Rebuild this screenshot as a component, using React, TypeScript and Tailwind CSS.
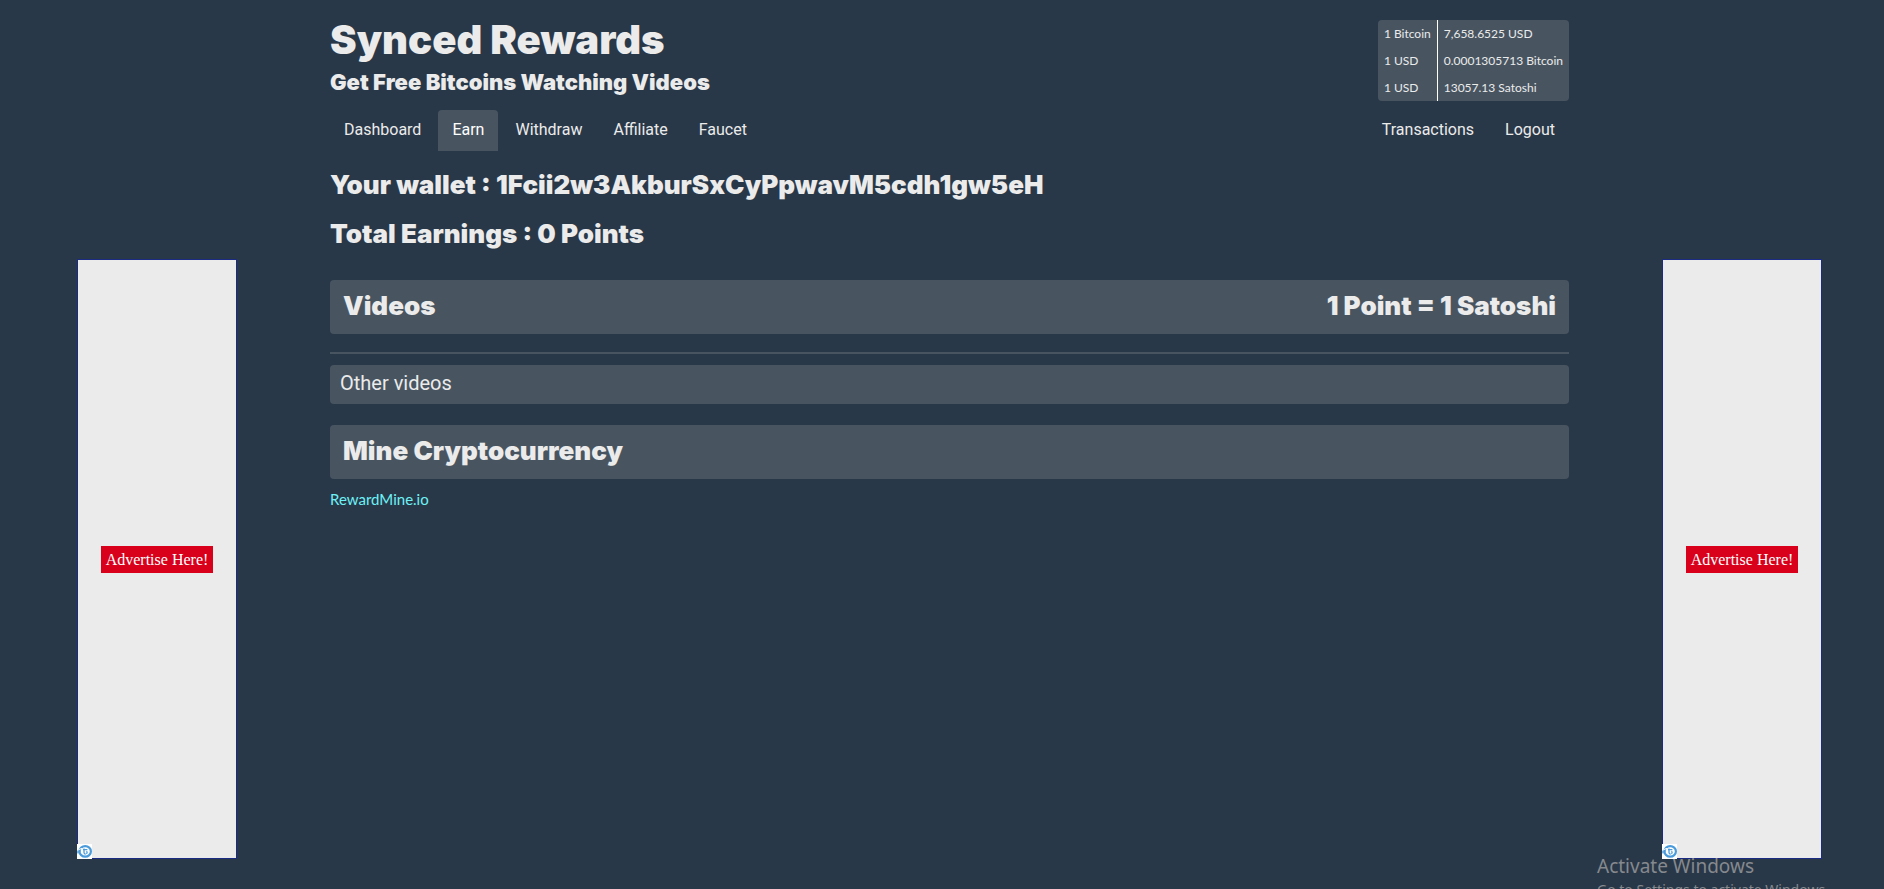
interface Tab {
  label: string;
  active?: boolean;
}

const leftTabs: Tab[] = [
  { label: 'Dashboard' },
  { label: 'Earn', active: true },
  { label: 'Withdraw' },
  { label: 'Affiliate' },
  { label: 'Faucet' },
];

const rightTabs: Tab[] = [{ label: 'Transactions' }, { label: 'Logout' }];

const rates = [
  ['1 Bitcoin', '7,658.6525 USD'],
  ['1 USD', '0.0001305713 Bitcoin'],
  ['1 USD', '13057.13 Satoshi'],
];

function Tabs({ items }: { items: Tab[] }) {
  return (
    <ul className="flex gap-[3px]">
      {items.map((t) => (
        <li key={t.label}>
          <a
            href="#"
            className={`block rounded-t px-[14px] pt-2 pb-[9px] font-['Roboto',sans-serif] text-base leading-6 ${
              t.active ? 'bg-[#485561] text-white' : 'text-[#ebebeb]'
            }`}
          >
            {t.label}
          </a>
        </li>
      ))}
    </ul>
  );
}

function AdLogo() {
  return (
    <svg viewBox="0 0 15 15" className="absolute -bottom-px -left-px h-[15px] w-[15px]" aria-hidden="true">
      <rect width="15" height="15" fill="#fff" />
      <ellipse cx="8.2" cy="7.4" rx="5.7" ry="5.3" fill="none" stroke="#4a9bdc" strokeWidth="2.2" />
      <path d="M1.6 5.6L5 4.4" stroke="#fff" strokeWidth="1" />
      <path d="M0 7.2h3.6M0 8.8h3" stroke="#4a9bdc" strokeWidth="1" />
      <path d="M7 4.4v4q0 1.8 1.8 1.8M6 5.6h4.4M9.4 7.2q1.4 1 0 2.6" fill="none" stroke="#4a9bdc" strokeWidth="1.3" />
    </svg>
  );
}

function AdColumn() {
  return (
    <aside className="relative mt-[259px] flex h-[600px] w-40 shrink-0 items-center justify-center border border-[#1b2a83] bg-[#ebebeb]">
      <a href="#" className="bg-[#d9001b] px-[5px] py-1 font-['Liberation_Serif',serif] text-base leading-[19px] whitespace-nowrap text-white">
        Advertise Here!
      </a>
      <AdLogo />
    </aside>
  );
}

function Panel({ title, note }: { title: string; note?: string }) {
  return (
    <div className="flex h-[54px] justify-between rounded bg-[#485561] px-[13px] pt-[11px]">
      <h2 className="font-['Inter',sans-serif] text-[26px] leading-[30px] font-black">{title}</h2>
      {note && <span className="font-['Inter',sans-serif] text-[26px] leading-[30px] font-black">{note}</span>}
    </div>
  );
}

export default function App() {
  return (
    <div className="relative flex min-h-screen items-start overflow-hidden bg-[#293848] pr-[62px] pl-[77px] font-['Lato',sans-serif] text-[#ebebeb]">
      <AdColumn />

      <main className="mx-[93px] min-w-0 flex-1 pt-5">
        <header className="flex items-start justify-between">
          <div>
            <h1 className="font-['Inter',sans-serif] text-[40px] leading-[40px] font-black">Synced Rewards</h1>
            <h3 className="mt-2 font-['Inter',sans-serif] text-[22px] leading-[28px] font-black">
              Get Free Bitcoins Watching Videos
            </h3>
          </div>
          <table className="rounded bg-[#485561] text-xs leading-[15px]">
            <tbody>
              {rates.map(([from, to]) => (
                <tr key={to}>
                  <td className="border-r border-white px-[6px] py-[6px]">{from}</td>
                  <td className="px-[6px] py-[6px]">{to}</td>
                </tr>
              ))}
            </tbody>
          </table>
        </header>

        <nav className="mt-[9px] flex justify-between">
          <Tabs items={leftTabs} />
          <Tabs items={rightTabs} />
        </nav>

        <h2 className="mt-[19px] font-['Inter',sans-serif] text-[26px] leading-[30px] font-black">
          Your wallet : 1Fcii2w3AkburSxCyPpwavM5cdh1gw5eH
        </h2>
        <h2 className="mt-[19px] font-['Inter',sans-serif] text-[26px] leading-[30px] font-black">
          Total Earnings : 0 Points
        </h2>

        <section className="mt-[31px]">
          <Panel title="Videos" note="1 Point = 1 Satoshi" />
          <hr className="mt-[18px] border-t-2 border-[#485561]" />
          <div className="mt-[11px] h-[39px] rounded bg-[#485561] px-[10px] pt-[7px]">
            <h4 className="font-['Roboto',sans-serif] text-xl leading-[23px]">Other videos</h4>
          </div>
        </section>

        <section className="mt-[21px]">
          <Panel title="Mine Cryptocurrency" />
          <a href="#" className="mt-[10px] inline-block text-[15px] leading-[21px] text-[#6df1f5]">
            RewardMine.io
          </a>
        </section>
      </main>

      <AdColumn />

      {/* desktop watermark */}
      <div className="pointer-events-none absolute top-[852px] left-[1597px] font-['Noto_Sans',sans-serif] whitespace-nowrap text-[#85898e]">
        <p className="text-[19px] leading-[28px]">Activate Windows</p>
        <p className="text-sm leading-5">Go to Settings to activate Windows.</p>
      </div>
    </div>
  );
}
